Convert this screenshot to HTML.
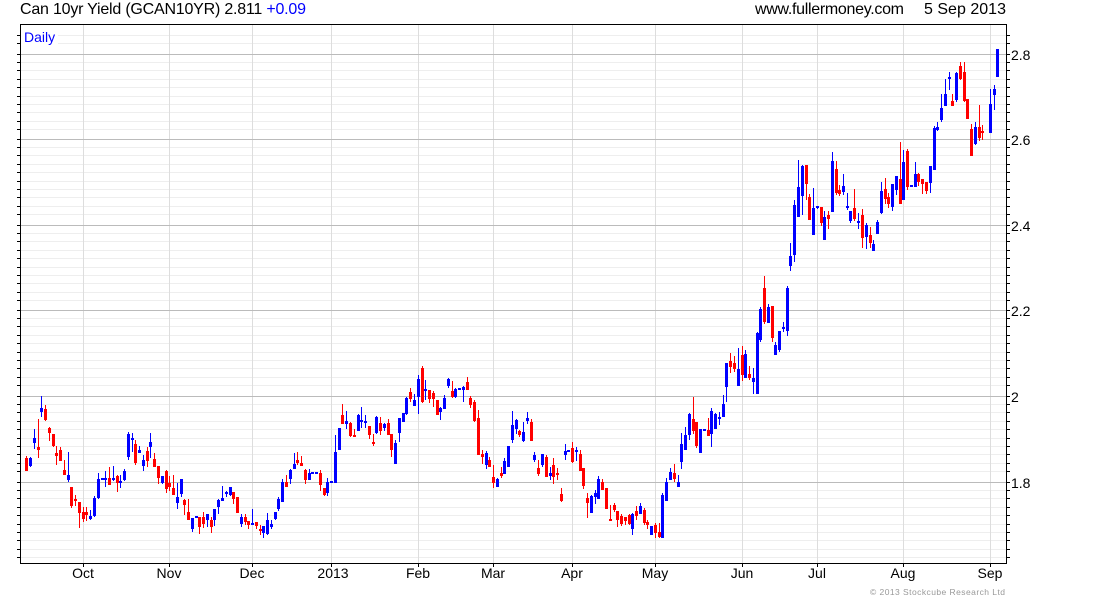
<!DOCTYPE html>
<html>
<head>
<meta charset="utf-8">
<title>Can 10yr Yield</title>
<style>
html,body{margin:0;padding:0;background:#fff;width:1100px;height:600px;overflow:hidden}
svg{position:absolute;left:0;top:0}
text{font-family:"Liberation Sans",Arial,sans-serif;fill:#000}
</style>
</head>
<body>
<svg id="c" xmlns="http://www.w3.org/2000/svg" width="1100" height="600" viewBox="0 0 1100 600" shape-rendering="crispEdges">
<g id="g"></g>
<g id="k"></g>
<rect x="21" y="29" width="37" height="18" fill="#fff"/>
<text x="24" y="42" font-size="14" style="fill:#0000ff">Daily</text>
<text x="20" y="14" font-size="16" textLength="286" lengthAdjust="spacing">Can 10yr Yield (GCAN10YR) 2.811 <tspan style="fill:#0000ff">+0.09</tspan></text>
<text x="755" y="14" font-size="16" textLength="149" lengthAdjust="spacing">www.fullermoney.com</text>
<text x="924" y="14" font-size="16" textLength="82" lengthAdjust="spacing">5 Sep 2013</text>
<g font-size="14">
<text x="1011" y="60">2.8</text>
<text x="1011" y="145">2.6</text>
<text x="1011" y="231">2.4</text>
<text x="1011" y="316">2.2</text>
<text x="1011" y="402">2</text>
<text x="1011" y="488">1.8</text>
</g>
<g font-size="14" text-anchor="middle">
<text x="83" y="578">Oct</text>
<text x="169" y="578">Nov</text>
<text x="252" y="578">Dec</text>
<text x="333" y="578">2013</text>
<text x="418" y="578">Feb</text>
<text x="493" y="578">Mar</text>
<text x="572" y="578">Apr</text>
<text x="655" y="578">May</text>
<text x="742" y="578">Jun</text>
<text x="817" y="578">Jul</text>
<text x="903" y="578">Aug</text>
<text x="990" y="578">Sep</text>
</g>
<text x="870" y="595" font-size="8.5" textLength="135" lengthAdjust="spacing" style="fill:#999">© 2013 Stockcube Research Ltd</text>
</svg>
<script>
var groups=[
[0,380,"79r228 234 272 272;91b231 234 258 261;103b147 174 188 207;115r117 201 210 234;124b48 84 96 111;136r75 87 120 123;148r141 144 159 183;160r162 162 198 201;169r198 219 228 255;181r201 210 243 243;193r240 270 285 285;205b216 285 300 306;214r321 321 378 384;226r345 357 363 378;238r366 366 399 444;250r381 396 417 426;259r381 396 405 423;271b390 408 417 420;283b348 354 408 411;295b279 297 354 357;307b295 295 300 300;316b273 295 298 321;328r261 294 315 315;340b258 294 300 303;352r285 288 309 336;361b285 303 309 324;373b267 273 300 303;385b156 162 231 240;397b159 174 180 216;406r180 192 249 255;418b198 210 219 219;430b225 240 258 273;442r201 213 243 261;451b159 186 201 234;463r219 237 261 261;475r258 258 294 312;487b288 288 309 312;499r270 273 327 339;508r288 309 321 333;520r285 324 345 345;532b309 351 369 387;544b297 297 342 351;553r357 360 375 405;565r357 396 420 420;577b414 414 447 456;589b408 408 414 414;598r411 411 441 462;610r396 411 432 444;622b402 402 420 441;634r411 420 441 459;643b387 387 420 438;655b357 360 381 402;667b318 354 363 363;679b333 336 342 351;691b321 321 345 348;700r336 336 357 372;712r351 351 399 399;724b402 411 432 441;736r402 411 426 435;745r423 423 435 447;757b387 429 435 435;769r426 426 438 447;781r435 447 453 465;790b438 438 459 474;802b399 420 462 465;814b420 432 441 447;826b396 396 417 420;835b351 357 387 393"],
[280,360,"7b357 366 426 426;19r345 366 381 381;31b327 330 357 372;43b279 312 327 327;52r276 300 309 315;64r288 309 318 318;76r327 330 360 372;88b327 339 360 360;97b336 336 342 342;109b336 336 342 342;121r330 339 375 393;133r384 384 405 408;142b354 366 399 408;154b363 363 369 369;166b225 276 369 369;178b204 204 270 270;187r132 165 192 192;199b153 183 192 207;211r186 189 228 231;223r207 225 231 231;235b162 165 213 213;244b141 180 186 204;256b165 183 189 204;268r198 198 225 237;280r222 246 252 258;289b168 171 219 222;301r171 189 213 225;313b189 192 204 213;325r177 189 225 225;334r222 222 270 291;346b240 249 312 312;358b174 174 219 246;370b159 159 186 186;379b111 114 162 165;391r84 96 117 126;403b102 120 138 138;415b45 57 111 162;427r18 24 126 129;436b60 87 93 120;448r90 90 117 129;460r93 99 117 141;472r120 120 165 165;481b141 144 156 180;493b105 114 147 147;505b54 57 78 84;517r63 93 111 114;526b84 87 111 114;538b84 84 90 90;550b78 81 90 126;562r51 66 90 90;571r108 114 135 144;583r120 126 183 186;595r150 174 285 285;607r270 282 291 312;619b273 279 315 327;628r291 300 321 321;640r315 351 369 384;652b354 357 381 381;664r321 339 348 354;673b294 303 342 342;685b258 258 321 321;697b153 195 240 249;709b177 180 207 222;718r210 213 225 231;730b186 216 243 246;742b156 174 183 192;754r177 186 243 243;763b276 285 300 306;775r300 324 342 348;787b282 282 315 321;799r285 291 351 351;811b321 339 348 360;820r294 315 351 372;832r324 339 345 360"],
[550,360,"34r384 402 423 426;46b252 273 285 300;55b270 270 276 276;67r246 264 306 309;79b261 270 276 303;91r270 282 333 333;100r324 324 378 387;112r399 414 429 474;124b405 408 459 459;136b390 399 411 432;145b348 357 417 417;157r357 366 390 390;169r384 384 447 447;181r435 477 483 483;193r429 435 450 456;202r453 453 480 501;214r462 468 492 498;226r471 471 483 495;238r462 465 492 495;247b459 462 507 525;259r438 453 468 480;271b429 438 462 462;283r444 450 489 495;292r480 486 495 507;304b498 498 525 525;316r489 495 519 534;328r489 516 531 534;337b399 405 534 534;349b354 366 423 423;361b324 336 360 360;373r312 339 357 366;385b345 366 381 381;394b219 252 306 327;406b201 225 270 270;418b159 162 225 240;430r111 177 213 222;439r186 186 258 264;451b207 207 279 279;463b207 207 213 213;475r174 210 228 228;484b144 153 222 261;496b159 162 207 207;508b156 171 177 195;520b105 132 171 171;529b9 9 81 126"],
[730,140,"1r639 663 681 699;13r648 669 687 696;25b624 687 738 738;37r618 645 705 723;46b630 642 714 714;58r678 702 714 720;70b684 714 726 762;82b576 579 762 762;91b501 507 600 606;103r408 444 546 552;115b492 501 549 549;127r498 498 594 606;136b606 615 645 645;148b573 573 630 636;160b546 561 567 576;172b438 444 573 588;181b309 348 378 393;193b180 195 345 366;205b60 141 231 231;217b75 78 168 225;229r75 75 132 180;238r162 171 240 240;250b144 204 285 285;262b198 198 204 207;274r201 201 249 258;283b213 231 300 300;295r213 225 237 267;307b36 63 216 216;319r63 87 159 165;328r135 150 162 168;340b102 138 156 165;352b159 198 204 210;361b213 213 243 249;373r147 204 237 243;385b219 243 249 267;397r207 225 294 324;409b249 255 291 327;421r261 285 309 324;430b300 312 333 333;442b240 246 282 282;454b126 153 219 222;466r114 147 177 192;475r159 171 192 204;487b132 132 201 213;499b108 108 150 165;511r6 117 192 192;520b30 66 180 180;532r27 33 141 150"],
[870,40,"124b435 435 441 441;136b366 402 441 441;145r399 402 426 438;157r417 417 432 462;169r426 426 453 462;181b378 378 429 459;193b258 264 390 390;202b246 261 270 273;214b162 204 240 246;226b117 162 198 198;238b96 111 117 150;247r162 183 198 198;259b96 99 180 186;271r66 78 117 120;283r66 96 183 186;292r177 177 237 237;304r252 267 348 348;316b246 261 312 315;328r195 261 294 303;337r255 273 279 300;361b147 192 279 279;373b135 147 165 210;382b27 27 111 111"]
];
var NS="http://www.w3.org/2000/svg";
function R(p,x,y,w,h,f){var r=document.createElementNS(NS,"rect");r.setAttribute("x",x);r.setAttribute("y",y);r.setAttribute("width",w);r.setAttribute("height",h);r.setAttribute("fill",f);p.appendChild(r);}
var g=document.getElementById("g"),k=document.getElementById("k");
var L=20,T=24,Rt=1006,B=563;
var majors=[54,139,225,310,396,482],offs=[8,16,25,33,42,50,58,67,75];
var minors=[35,43];
majors.forEach(function(m){offs.forEach(function(o){if(m+o<B)minors.push(m+o);});});
minors.forEach(function(y){R(g,L,y,Rt-L,1,"#eeeeee");});
var months=[83,169,252,331,418,493,572,655,742,817,903,990];
months.forEach(function(x){R(g,x,T,1,B-T,"#dddddd");});
majors.forEach(function(y){R(g,L,y,Rt-L,1,"#bbbbbb");});
groups.forEach(function(G){
  G[2].split(";").forEach(function(s){
    var m=s.match(/^(\d+)([rb])(\d+) (\d+) (\d+) (\d+)$/);
    var x=Math.floor(G[0]+(+m[1])/3),c=m[2]=="r"?"#ff0000":"#0000ff";
    var y=function(v){return Math.round(G[1]+(+v)/3);};
    var hi=y(m[3]),t=y(m[4]),b=y(m[5]),lo=y(m[6]);
    if(lo>hi)R(k,x,hi,1,lo-hi,c);
    R(k,x-1,t,3,Math.max(b-t,2),c);
  });
});
R(k,L,T,Rt-L+1,1,"#000");
R(k,L,B,Rt-L+1,1,"#000");
R(k,L,T,1,B-T+1,"#000");
R(k,Rt,T,1,B-T+1,"#000");
minors.concat(majors).forEach(function(y){R(k,L-3,y,3,1,"#000");R(k,Rt+1,y,3,1,"#000");});
months.forEach(function(x){R(k,x,B+1,1,3,"#000");});
</script>
</body>
</html>
